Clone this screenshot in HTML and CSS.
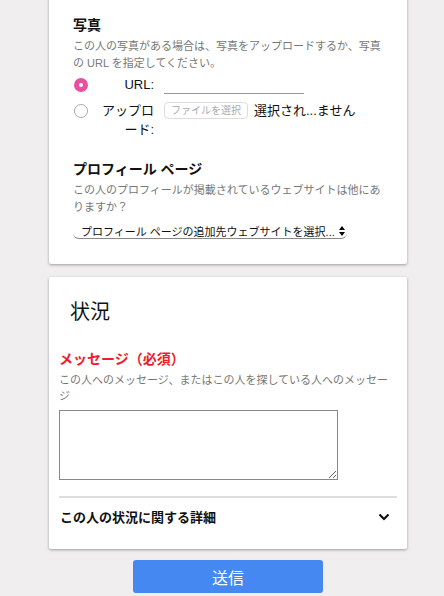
FILE: index.html
```html
<!DOCTYPE html>
<html lang="ja">
<head>
  <meta charset="UTF-8" />
  <title>状況</title>
  <link rel="stylesheet" href="styles.css">
</head>
<body>

<div class="page">

  <!-- Photo / profile card -->
  <div class="card card-top">
    <h3>写真</h3>
    <p class="desc">この人の写真がある場合は、写真をアップロードするか、写真の URL を指定してください。</p>

    <div class="choice">
      <input type="radio" name="photo" checked>
      <label class="choice-label">URL:</label>
      <input class="url-input" type="text">
    </div>
    <div class="choice">
      <input type="radio" name="photo">
      <label class="choice-label">アップロード:</label>
      <div class="file-field">
        <span class="file-btn">ファイルを選択</span>
        <span class="file-name">選択され...ません</span>
      </div>
    </div>

    <h3 class="profile-head">プロフィール ページ</h3>
    <p class="desc">この人のプロフィールが掲載されているウェブサイトは他にありますか？</p>
    <div class="select">
      <span>プロフィール ページの追加先ウェブサイトを選択...</span>
      <svg width="6" height="10" viewBox="0 0 6 10"><path d="M3 0 L6 4 H0 Z M3 10 L6 6 H0 Z" fill="#000"/></svg>
    </div>
  </div>

  <!-- Status card -->
  <div class="card card-status">
    <h2>状況</h2>
    <label class="required">メッセージ（必須）</label>
    <p class="desc">この人へのメッセージ、またはこの人を探している人へのメッセージ</p>
    <textarea class="message"></textarea>

    <div class="details">
      <span>この人の状況に関する詳細</span>
      <svg width="12" height="8" viewBox="0 0 12 8"><path d="M1.5 1.5 L6 6 L10.5 1.5" fill="none" stroke="#111" stroke-width="2.2"/></svg>
    </div>
  </div>

  <button class="submit">送信</button>
</div>

</body>
</html>
```

FILE: styles.css
```css
body {
  margin: 0;
  background: #f0eeee;
  font-family: "Liberation Sans", "Noto Sans CJK JP", sans-serif;
  color: #111;
  overflow: hidden;
}
.page {
  width: 358px;
  margin-left: 49px;
}
.card {
  background: #fff;
  border-radius: 2px;
  box-shadow: 0 1px 3px rgba(0, 0, 0, 0.35);
}
.card-top {
  margin-top: -10px;
  padding: 25px 24px 25px;
}
h3 {
  margin: 0;
  font-size: 14px;
  line-height: 20px;
  font-weight: bold;
}
.desc {
  margin: 3px 0 0;
  font-size: 11px;
  line-height: 17px;
  color: #777;
}
.choice {
  display: flex;
  align-items: flex-start;
  margin-top: 3px;
  font-size: 13px;
  line-height: 19px;
}
.choice + .choice {
  margin-top: 7px;
}
.choice input[type=radio] {
  appearance: none;
  width: 14px;
  height: 14px;
  margin: 3px 14px 0 1px;
  border: 1px solid #aaa;
  border-radius: 50%;
  background: #fff;
  flex-shrink: 0;
}
.choice input[type=radio]:checked {
  border: 5px solid #e9509f;
  background: #fff;
}
.choice-label {
  width: 52px;
  text-align: right;
  margin-right: 10px;
}
.url-input {
  width: 140px;
  height: 18px;
  padding: 0;
  border: none;
  border-bottom: 1px solid #999;
  outline: none;
}
.file-field {
  display: flex;
  align-items: center;
}
.file-btn {
  border: 1px solid #ddd;
  border-radius: 4px;
  font-size: 10px;
  line-height: 15px;
  color: #aaa;
  padding: 0 6px;
  margin-right: 6px;
}
.profile-head {
  margin-top: 20px;
}
.select {
  display: flex;
  align-items: center;
  justify-content: space-between;
  width: 274px;
  height: 16px;
  margin-top: 7px;
  padding: 0 2px 0 8px;
  box-sizing: border-box;
  font-size: 11px;
  white-space: nowrap;
  border-bottom: 1px solid #888;
  border-radius: 0 0 6px 6px;
}
.card-status {
  margin-top: 13px;
  padding: 21px 10px 14px;
}
h2 {
  margin: 0;
  padding-left: 11px;
  font-size: 20px;
  line-height: 28px;
  font-weight: normal;
}
.required {
  display: block;
  margin-top: 23px;
  font-size: 14px;
  line-height: 20px;
  font-weight: bold;
  color: #ee1c2e;
}
.card-status .desc {
  margin-top: 3px;
  line-height: 16px;
}
.message {
  display: block;
  width: 279px;
  height: 70px;
  margin-top: 6px;
  box-sizing: border-box;
  border: 1px solid #888;
  resize: vertical;
}
.details {
  display: flex;
  align-items: center;
  justify-content: space-between;
  margin-top: 16px;
  border-top: 2px solid #ddd;
  padding: 0 7px 0 1px;
  height: 37px;
  font-size: 13px;
  font-weight: bold;
}
.submit {
  display: block;
  width: 190px;
  height: 33px;
  margin: 11px 0 0 84px;
  background: #4688f1;
  color: #fff;
  border: none;
  border-radius: 3px;
  font-family: inherit;
  font-size: 16px;
  cursor: pointer;
}
```
